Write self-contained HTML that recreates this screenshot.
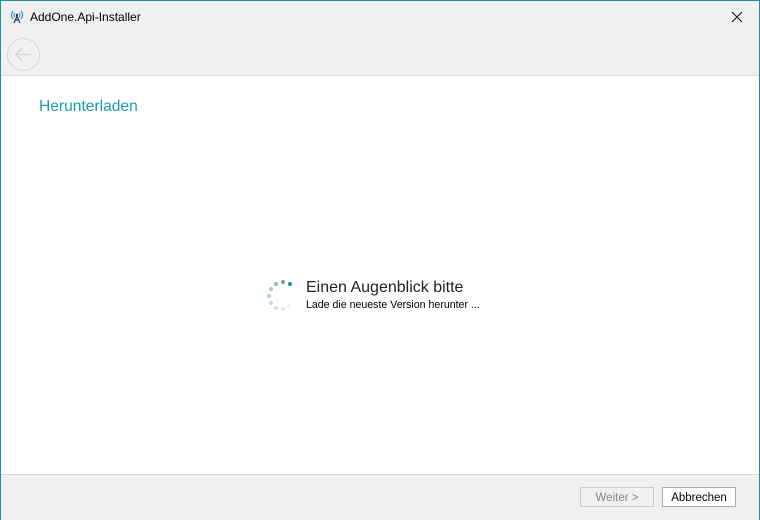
<!DOCTYPE html>
<html><head><style>
body{margin:0;width:760px;height:520px;overflow:hidden;font-family:"Liberation Sans",sans-serif;}
.win{position:absolute;left:0;top:0;width:758px;height:518px;border:1px solid #1e8e9e;background:#fff;}
.top{position:absolute;left:0;top:0;width:758px;height:74px;background:#f0f0f0;border-bottom:1px solid #d9d9d9;}
.title{position:absolute;left:29px;top:9px;font-size:12px;color:#000;}
.back{position:absolute;left:6px;top:37px;width:31px;height:31px;border:1.5px solid #d6d6d6;border-radius:50%;}
h1{position:absolute;left:38px;top:97px;margin:0;font-weight:normal;font-size:15.6px;color:#1a9cb0;}
.main{position:absolute;left:305px;top:278px;font-size:16px;color:#222;}
.sub{position:absolute;left:305px;top:298px;font-size:10.6px;color:#000;}
.bottom{position:absolute;left:0;top:473px;width:758px;height:45px;background:#f0f0f0;border-top:1px solid #d9d9d9;}
.btn{position:absolute;top:12px;height:20px;width:74px;font-size:11.5px;text-align:center;line-height:20px;box-sizing:border-box;}
</style></head><body>
<div class="win">
<div class="top">
<svg style="position:absolute;left:8px;top:7px" width="16" height="16" viewBox="0 0 16 16" fill="none" stroke-width="1.2">
<path d="M4 3a6 6 0 0 0 0 8M12 3a6 6 0 0 1 0 8" stroke="#3a8fd0"/>
<path d="M5.8 5a3 3 0 0 0 0 4M10.2 5a3 3 0 0 1 0 4" stroke="#3a8fd0"/>
<circle cx="8" cy="7" r="1.2" fill="#333" stroke="none"/>
<path d="M8 8L5 15M8 8l3 7M6 12h4" stroke="#333"/>
</svg>
<div class="title">AddOne.Api-Installer</div>
<svg style="position:absolute;left:730px;top:10px" width="12" height="12"><path d="M1 1L11 11M11 1L1 11" stroke="#222" stroke-width="1.2"/></svg>
<div class="back"><svg width="31" height="31" viewBox="0 0 31 31"><path d="M8 15.5h15M14 9.5l-6 6 6 6" stroke="#d6d6d6" stroke-width="1.6" fill="none"/></svg></div>
</div>
<h1>Herunterladen</h1>
<svg style="position:absolute;left:262px;top:277px" width="34" height="36">
<circle cx="27" cy="6" r="2" fill="#1e8e9e"/>
<circle cx="20" cy="4" r="2" fill="#5aa8b4"/>
<circle cx="13" cy="6" r="2" fill="#8ab6be"/>
<circle cx="8" cy="11" r="2" fill="#a8c4c9"/>
<circle cx="6" cy="18" r="2" fill="#bccfd2"/>
<circle cx="8" cy="25" r="2" fill="#cad9db"/>
<circle cx="13" cy="30" r="2" fill="#d6e0e2"/>
<circle cx="20" cy="31" r="2" fill="#e2e8e9"/>
<circle cx="26" cy="28" r="2" fill="#eef1f1"/>
</svg>
<div class="main">Einen Augenblick bitte</div>
<div class="sub">Lade die neueste Version herunter ...</div>
<div class="bottom">
<div class="btn" style="left:579px;border:1px solid #ccc;color:#888;">Weiter &gt;</div>
<div class="btn" style="left:661px;border:1px solid #adadad;background:#fff;color:#000;">Abbrechen</div>
</div>
</div>
</body></html>
